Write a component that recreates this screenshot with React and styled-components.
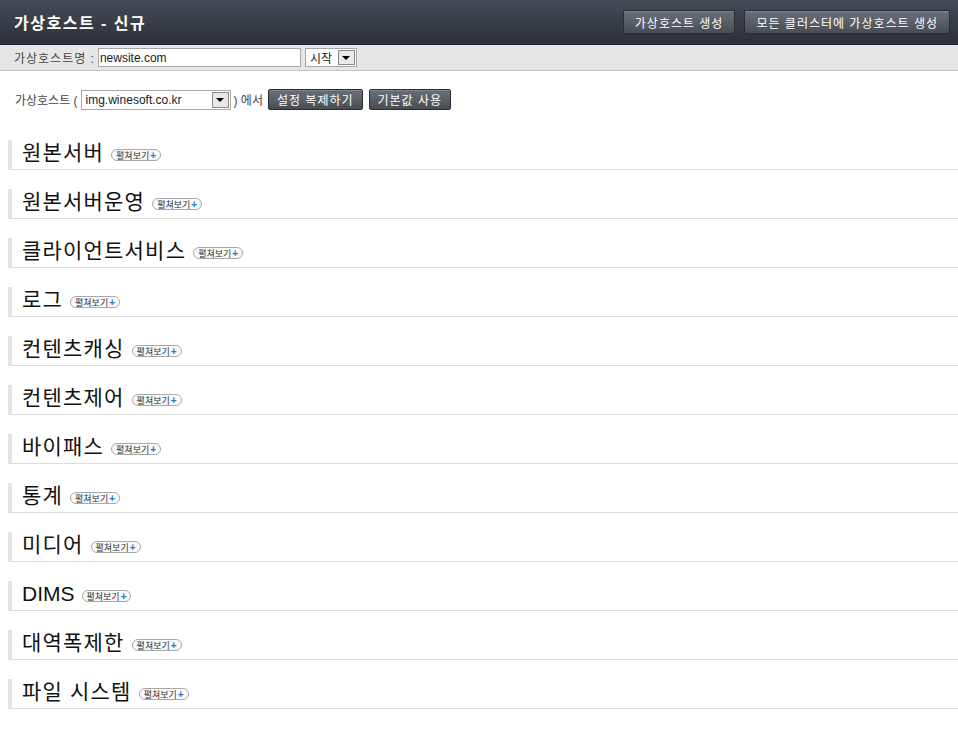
import React from 'react';
import styled, { createGlobalStyle } from 'styled-components';

const GlobalStyle = createGlobalStyle`
  body {
    margin: 0;
    background: #fff;
    font-family: "Liberation Sans", Arial, "Noto Sans CJK KR", sans-serif;
    color: #333;
  }
`;

const Header = styled.div`
  height: 44px;
  display: flex;
  align-items: center;
  justify-content: space-between;
  padding: 0 8px 0 14px;
  background: linear-gradient(#454b54, #2c3139);
  border-bottom: 1px solid #1f2228;
`;

const Title = styled.h1`
  margin: 0;
  font-size: 16px;
  font-weight: bold;
  color: #fff;
  letter-spacing: 1.5px;
`;

const HeaderActions = styled.div`
  display: flex;
  gap: 9px;
`;

const DarkButton = styled.button`
  height: ${({ small }) => (small ? '21px' : '24px')};
  padding: 0 ${({ small }) => (small ? '8px' : '11px')};
  font-family: inherit;
  font-size: 12px;
  color: #fff;
  background: linear-gradient(#6a7079, #484d55);
  border: 1px solid #2a2d33;
  border-radius: 2px;
  box-shadow: inset 0 1px 0 rgba(255, 255, 255, 0.15);
  letter-spacing: 1px;
  cursor: pointer;
`;

const NameBar = styled.div`
  height: 25px;
  display: flex;
  align-items: center;
  gap: 3px;
  padding: 0 14px;
  background: #e6e6e6;
  border-bottom: 1px solid #c4c4c4;
  font-size: 12px;
  color: #444;
  letter-spacing: 1px;
`;

const TextInput = styled.input`
  width: 199px;
  height: 15px;
  padding: 1px 1px;
  border: 1px solid #a6a6a6;
  font-family: inherit;
  font-size: 12px;
  color: #222;
  margin-right: 1px;
  letter-spacing: 0;
`;

const SelectBox = styled.div`
  display: inline-flex;
  align-items: stretch;
  height: ${({ h }) => h || 19}px;
  width: ${({ w }) => w}px;
  border: 1px solid #a6a6a6;
  background: #fff;
  font-size: 12px;
  color: #222;
  box-sizing: border-box;
  letter-spacing: 0;
`;

const SelectValue = styled.span`
  flex: 1;
  display: flex;
  align-items: center;
  padding-left: 4px;
`;

const SelectArrow = styled.span`
  width: 15px;
  display: flex;
  align-items: center;
  justify-content: center;
  background: #e8e8e8;
  border: 1px solid #8a8a8a;
  margin: 1px;

  &::after {
    content: '';
    border-left: 4px solid transparent;
    border-right: 4px solid transparent;
    border-top: 4px solid #000;
  }
`;

const CopyRow = styled.div`
  display: flex;
  align-items: center;
  gap: 3px;
  padding: 18px 15px 0;
  font-size: 12px;
  color: #444;
`;

const ButtonGroup = styled.div`
  display: flex;
  gap: 6px;
  margin-left: 2px;
`;

const Sections = styled.div`
  padding: 30px 0 0 8px;
`;

const Section = styled.div`
  height: 29px;
  margin-top: 19px;
  display: flex;
  align-items: center;
  gap: 7px;
  padding-left: 10px;
  border-left: 4px solid #e4e4e4;
  border-bottom: 1px solid #dcdcdc;

  &:first-child {
    margin-top: 0;
  }
`;

const SectionTitle = styled.h2`
  margin: 0 0 3px;
  font-size: 21px;
  font-weight: normal;
  color: #111;
  line-height: 24px;
  letter-spacing: ${({ latin }) => (latin ? '0' : '1.2px')};
`;

const Expand = styled.span`
  display: inline-flex;
  align-items: center;
  height: 10px;
  padding: 0 4px;
  margin-top: 1px;
  border: 1px solid #a8a8a8;
  border-radius: 6px;
  font-size: 9px;
  color: #333;
  background: #fafafa;

  b {
    color: #2f74c5;
    font-weight: bold;
    font-size: 10px;
    margin-left: 1px;
  }
`;

const sections = [
  '원본서버',
  '원본서버운영',
  '클라이언트서비스',
  '로그',
  '컨텐츠캐싱',
  '컨텐츠제어',
  '바이패스',
  '통계',
  '미디어',
  'DIMS',
  '대역폭제한',
  '파일 시스템',
];

const App = () => {
  return (
    <>
      <GlobalStyle />
      <Header>
        <Title>가상호스트 - 신규</Title>
        <HeaderActions>
          <DarkButton>가상호스트 생성</DarkButton>
          <DarkButton>모든 클러스터에 가상호스트 생성</DarkButton>
        </HeaderActions>
      </Header>
      <NameBar>
        가상호스트명 :
        <TextInput defaultValue="newsite.com" />
        <SelectBox w={52}>
          <SelectValue>시작</SelectValue>
          <SelectArrow />
        </SelectBox>
      </NameBar>
      <CopyRow>
        가상호스트 (
        <SelectBox w={150} h={20}>
          <SelectValue>img.winesoft.co.kr</SelectValue>
          <SelectArrow />
        </SelectBox>
        ) 에서
        <ButtonGroup>
          <DarkButton small>설정 복제하기</DarkButton>
          <DarkButton small>기본값 사용</DarkButton>
        </ButtonGroup>
      </CopyRow>
      <Sections>
        {sections.map((name) => (
          <Section key={name}>
            <SectionTitle latin={/^[A-Z]+$/.test(name)}>{name}</SectionTitle>
            <Expand>
              펼쳐보기<b>+</b>
            </Expand>
          </Section>
        ))}
      </Sections>
    </>
  );
};

export default App;
